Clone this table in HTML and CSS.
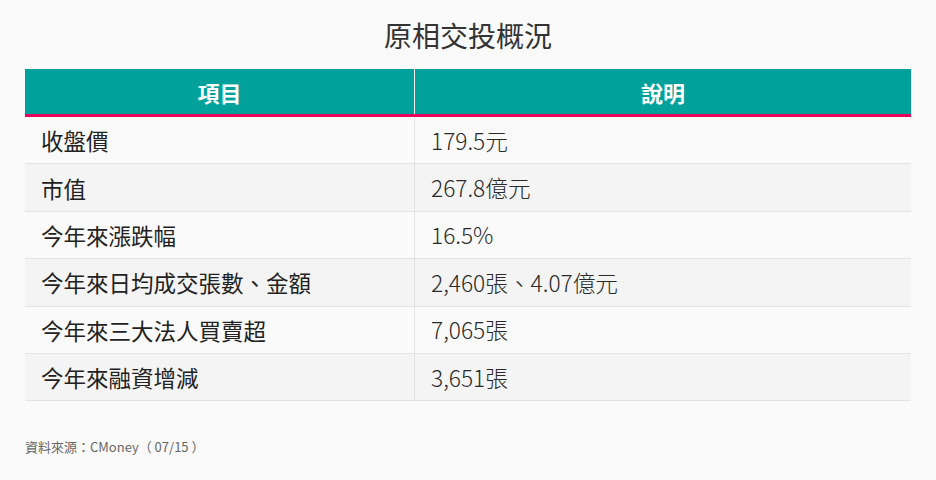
FILE: index.html
```html
<!doctype html>
<html>
    <head>
        <meta charset="utf-8">
        <link rel="stylesheet" href="styles.css">
    </head>
    <body>
        <h1 class="title">原相交投概況</h1>
        <table class="summary">
            <thead>
                <tr>
                    <th class="col-item">項目</th>
                    <th>說明</th>
                </tr>
            </thead>
            <tbody>
                <tr><td>收盤價</td><td>179.5元</td></tr>
                <tr><td>市值</td><td>267.8億元</td></tr>
                <tr><td>今年來漲跌幅</td><td>16.5%</td></tr>
                <tr><td>今年來日均成交張數、金額</td><td>2,460張、4.07億元</td></tr>
                <tr><td>今年來三大法人買賣超</td><td>7,065張</td></tr>
                <tr><td>今年來融資增減</td><td>3,651張</td></tr>
            </tbody>
        </table>
        <p class="source">資料來源：CMoney（ 07/15 ）</p>
    </body>
</html>
```

FILE: styles.css
```css
html,
body {
    margin: 0;
    background: #fafafa;
}
body {
    padding: 17px 25px 0;
    font-family: "Noto Sans CJK TC", "Noto Sans", sans-serif;
    color: #222;
}
.title {
    margin: 0 0 16px;
    font-size: 28px;
    line-height: 36px;
    font-weight: 400;
    text-align: center;
    color: #333;
}
.summary {
    width: 100%;
    border-collapse: collapse;
}
.summary th {
    height: 45px;
    padding: 0;
    background: #00a19a;
    color: #fff;
    font-size: 22px;
    font-weight: 700;
    border-bottom: 3px solid #e8005a;
}
.summary th + th {
    border-left: 1px solid #fff;
}
.col-item {
    width: 389px;
}
.summary td {
    height: 46.4px;
    padding: 0 0 0 16px;
    font-size: 22.5px;
    border-bottom: 1px solid #e3e3e3;
}
.summary td + td {
    border-left: 1px solid #e3e3e3;
    font-size: 22.7px;
    font-weight: 300;
    color: #2a2a2a;
}
.summary tbody tr:nth-child(even) td {
    background: #f4f4f4;
}
.source {
    margin: 36px 0 0;
    font-size: 13px;
    color: #666;
}
```
